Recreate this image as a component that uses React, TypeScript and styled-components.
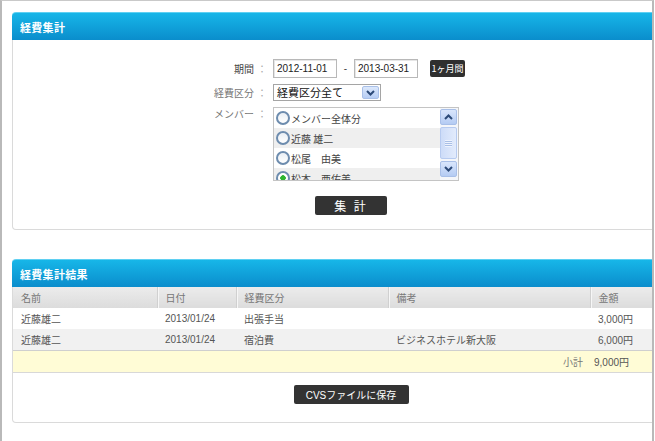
import React from 'react';
import styled, {createGlobalStyle} from 'styled-components';

const GlobalStyle = createGlobalStyle`
  html, body {
    margin: 0;
    padding: 0;
    background: #fff;
  }
  body {
    font-family: "Liberation Sans", "Noto Sans CJK JP", sans-serif;
    font-size: 10px;
    color: #444;
  }
`;

type Row = {name: string; date: string; kind: string; note: string; amount: string};

const rows: Row[] = [
    {name: '近藤雄二', date: '2013/01/24', kind: '出張手当', note: '', amount: '3,000円'},
    {name: '近藤雄二', date: '2013/01/24', kind: '宿泊費', note: 'ビジネスホテル新大阪', amount: '6,000円'},
];

const members = [
    {label: 'メンバー全体分', checked: false},
    {label: '近藤 雄二', checked: false},
    {label: '松尾　由美', checked: false},
    {label: '松本　亜佑美', checked: true},
];

const Chevron = ({up}: {up?: boolean}) => (
    <svg width="9" height="6" viewBox="0 0 9 6">
        <path d={up ? 'M1 5 L4.5 1.5 L8 5' : 'M1 1 L4.5 4.5 L8 1'} fill="none" stroke="#2c4a78" strokeWidth="2"/>
    </svg>
);

const App = () => {
    return (
        <>
            <GlobalStyle/>
            <Frame>
                <Panel>
                    <PanelHeader>経費集計</PanelHeader>
                    <FormBody>
                        <FormGrid>
                            <Label>期間<Colon>：</Colon></Label>
                            <FieldRow>
                                <DateInput>2012-11-01</DateInput>
                                <Dash>-</Dash>
                                <DateInput>2013-03-31</DateInput>
                                <SmallButton>1ヶ月間</SmallButton>
                            </FieldRow>
                            <Label $muted>経費区分<Colon>：</Colon></Label>
                            <FieldRow>
                                <Select>
                                    <span>経費区分全て</span>
                                    <ArrowButton><Chevron/></ArrowButton>
                                </Select>
                            </FieldRow>
                            <Label $muted $top>メンバー<Colon>：</Colon></Label>
                            <ListBox>
                                <ListItems>
                                    {members.map((m, i) => (
                                        <ListItem key={m.label} $striped={i % 2 === 1}>
                                            <Radio $checked={m.checked}/>
                                            <span>{m.label}</span>
                                        </ListItem>
                                    ))}
                                </ListItems>
                                <ScrollBar>
                                    <ScrollButton><Chevron up/></ScrollButton>
                                    <Thumb><Grip/></Thumb>
                                    <ScrollButton><Chevron/></ScrollButton>
                                </ScrollBar>
                            </ListBox>
                        </FormGrid>
                        <ButtonRow>
                            <DarkButton $width={72} $size={12}>集 計</DarkButton>
                        </ButtonRow>
                    </FormBody>
                </Panel>

                <Panel>
                    <PanelHeader>経費集計結果</PanelHeader>
                    <ResultBody>
                        <Table>
                            <colgroup>
                                <col style={{width: 144}}/>
                                <col style={{width: 79}}/>
                                <col style={{width: 152}}/>
                                <col style={{width: 202}}/>
                                <col/>
                            </colgroup>
                            <thead>
                            <tr>
                                <Th>名前</Th>
                                <Th $divider>日付</Th>
                                <Th $divider>経費区分</Th>
                                <Th $divider>備考</Th>
                                <Th $divider>金額</Th>
                            </tr>
                            </thead>
                            <tbody>
                            {rows.map((r, i) => (
                                <Tr key={i} $striped={i % 2 === 1}>
                                    <Td>{r.name}</Td>
                                    <Td>{r.date}</Td>
                                    <Td>{r.kind}</Td>
                                    <Td>{r.note}</Td>
                                    <Td>{r.amount}</Td>
                                </Tr>
                            ))}
                            <TotalRow>
                                <TotalLabel colSpan={4}>小計</TotalLabel>
                                <TotalValue>9,000円</TotalValue>
                            </TotalRow>
                            </tbody>
                        </Table>
                        <ButtonRow $top={12}>
                            <DarkButton $width={115} $size={10}>CVSファイルに保存</DarkButton>
                        </ButtonRow>
                    </ResultBody>
                </Panel>
            </Frame>
        </>
    );
};
export default App

export const Frame = styled.div`
  box-sizing: border-box;
  width: 654px;
  height: 441px;
  border-top: 1px solid #c9c9c9;
  border-left: 2px solid #b9b9b9;
  border-right: 2px solid #b9b9b9;
  padding: 11px 0 0 10px;
  overflow: hidden;
  display: flex;
  flex-direction: column;
  gap: 29px;
`
export const Panel = styled.section`
  width: 680px;
  flex-shrink: 0;
`
export const PanelHeader = styled.h2`
  margin: 0;
  height: 28px;
  box-sizing: border-box;
  padding-left: 8px;
  display: flex;
  align-items: center;
  border-radius: 4px 4px 0 0;
  border-top: 1px solid #5fd0f2;
  background: linear-gradient(#17b6e8, #0a8dcc);
  color: #fff;
  font-size: 11px;
  font-weight: bold;
  font-family: "Noto Sans CJK JP", sans-serif;
  letter-spacing: 0.3px;
`
const Body = styled.div`
  border: 1px solid #dadada;
  border-top: none;
  border-radius: 0 0 4px 4px;
  background: #fff;
`
export const FormBody = styled(Body)`
  padding: 19px 0 14px;
`
export const ResultBody = styled(Body)`
  padding-bottom: 18px;
`
export const FormGrid = styled.div`
  display: grid;
  grid-template-columns: 254px auto;
  column-gap: 6px;
  row-gap: 6px;
  align-items: center;
`
export const Label = styled.div<{ $muted?: boolean; $top?: boolean }>`
  display: flex;
  justify-content: flex-end;
  align-self: ${p => p.$top ? 'start' : 'center'};
  color: ${p => p.$muted ? '#777' : '#444'};
  font-family: "Noto Sans CJK JP", sans-serif;
  font-size: 10px;
  line-height: 14px;
`
export const Colon = styled.span`
  margin-left: 3px;
  color: #aaa;
`
export const FieldRow = styled.div`
  display: flex;
  align-items: center;
`
export const DateInput = styled.div`
  box-sizing: border-box;
  width: 64px;
  height: 19px;
  padding: 0 3px;
  display: flex;
  align-items: center;
  border: 1px solid #b8b8b8;
  box-shadow: inset 1px 1px 0 #e6e6e6;
  color: #222;
  font-size: 10px;
`
export const Dash = styled.span`
  width: 17px;
  text-align: center;
  color: #444;
`
export const SmallButton = styled.div`
  margin-left: 12px;
  width: 35px;
  height: 17px;
  display: flex;
  align-items: center;
  justify-content: center;
  background: #2f2f2f;
  border-radius: 2px;
  color: #fff;
  font-family: "Noto Sans CJK JP", sans-serif;
  font-size: 9px;
`
export const Select = styled.div`
  box-sizing: border-box;
  width: 108px;
  height: 17px;
  padding: 0 1px 0 3px;
  display: flex;
  align-items: center;
  justify-content: space-between;
  border: 1px solid #a5a5a5;
  color: #111;
  font-family: "Noto Sans CJK JP", sans-serif;
  font-size: 11px;
  line-height: 15px;
`
export const ArrowButton = styled.div`
  width: 17px;
  height: 13px;
  display: flex;
  align-items: center;
  justify-content: center;
  border-radius: 2px;
  background: linear-gradient(#dce8fc, #b6cdf4);
  border: 1px solid #a9c0e8;
  box-sizing: border-box;
`
export const ListBox = styled.div`
  box-sizing: border-box;
  width: 186px;
  height: 74px;
  display: flex;
  border: 1px solid #c4c4c4;
  overflow: hidden;
`
export const ListItems = styled.div`
  flex: 1;
  display: flex;
  flex-direction: column;
`
export const ListItem = styled.div<{ $striped: boolean }>`
  flex-shrink: 0;
  height: 20px;
  display: flex;
  align-items: center;
  gap: 1px;
  padding-left: 2px;
  background: ${p => p.$striped ? '#efefef' : '#fff'};
  color: #444;
  font-family: "Noto Sans CJK JP", sans-serif;
  font-size: 10px;
`
export const Radio = styled.span<{ $checked: boolean }>`
  box-sizing: border-box;
  width: 14px;
  height: 14px;
  border-radius: 50%;
  border: 2px solid #6d8cae;
  background: ${p => p.$checked
    ? 'radial-gradient(circle, #2fb52f 0 2.5px, #fff 3px)'
    : 'linear-gradient(#e9eef4, #fff)'};
`
export const ScrollBar = styled.div`
  width: 17px;
  display: flex;
  flex-direction: column;
  gap: 2px;
  padding: 1px 1px 1px 0;
  background: #f4f6fa;
`
export const ScrollButton = styled.div`
  height: 16px;
  display: flex;
  align-items: center;
  justify-content: center;
  border-radius: 2px;
  border: 1px solid #a8bfe8;
  box-sizing: border-box;
  background: linear-gradient(#d9e6fc, #b4cbf3);
`
export const Thumb = styled.div`
  height: 32px;
  display: flex;
  align-items: center;
  justify-content: center;
  border-radius: 2px;
  border: 1px solid #b7cbf0;
  box-sizing: border-box;
  background: linear-gradient(90deg, #cddcf8, #e2ebfc);
`
export const Grip = styled.span`
  width: 7px;
  height: 7px;
  background: repeating-linear-gradient(#eef3fd 0 1px, #a9bfe6 1px 2px);
`
export const ButtonRow = styled.div<{ $top?: number }>`
  display: flex;
  justify-content: center;
  margin-top: ${p => p.$top ?? 15}px;
  padding-right: 2px;
`
export const DarkButton = styled.div<{ $width: number; $size: number }>`
  width: ${p => p.$width}px;
  height: 19px;
  display: flex;
  align-items: center;
  justify-content: center;
  background: #333;
  border-radius: 2px;
  color: #fff;
  font-family: "Liberation Sans", "Noto Sans CJK JP", sans-serif;
  font-size: ${p => p.$size}px;
  letter-spacing: ${p => p.$size > 10 ? '2px' : '0'};
`
export const Table = styled.table`
  width: 100%;
  table-layout: fixed;
  border-collapse: collapse;
  font-size: 10px;
`
export const Th = styled.th<{ $divider?: boolean }>`
  height: 21px;
  padding: 0 8px;
  text-align: left;
  font-weight: normal;
  color: #777;
  background: linear-gradient(#ececec, #dcdcdc);
  border-left: ${p => p.$divider ? '1px solid #d0d0d0' : 'none'};
  box-shadow: ${p => p.$divider ? 'inset 1px 0 0 #f6f6f6' : 'none'};
`
export const Tr = styled.tr<{ $striped: boolean }>`
  background: ${p => p.$striped ? '#f1f1f1' : '#fff'};
`
export const Td = styled.td`
  height: 21px;
  padding: 0 8px;
  color: #555;
  white-space: nowrap;
`
export const TotalRow = styled.tr`
  background: #fffcd6;
  border-top: 1px solid #cfcfcf;
  border-bottom: 1px solid #d8d8d8;
`
export const TotalLabel = styled.td`
  height: 21px;
  padding: 0 7px 0 0;
  text-align: right;
  color: #777;
`
export const TotalValue = styled.td`
  padding: 0 4px;
  color: #555;
`
